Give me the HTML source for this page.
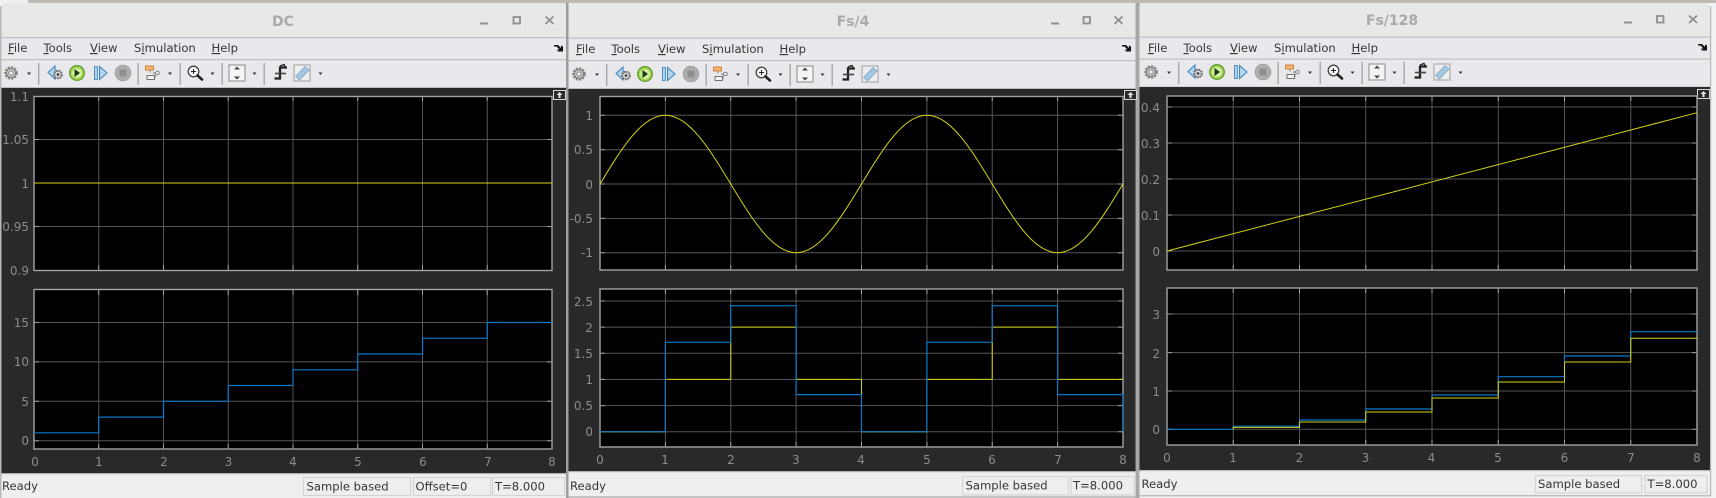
<!DOCTYPE html>
<html><head><meta charset="utf-8"><title>Scopes</title>
<style>
html,body{margin:0;padding:0;background:#ececec;width:1716px;height:498px;overflow:hidden}
svg{display:block}
text{font-family:"DejaVu Sans","Liberation Sans",sans-serif}
.t{font-weight:bold;font-size:14px;fill:#a9a9a9;text-anchor:middle}
.m{font-size:11.6px;fill:#363636}
.s{font-size:11.6px;fill:#363636}
.yl{font-size:12px;fill:#8c8c8c;text-anchor:end}
.xl{font-size:12px;fill:#8c8c8c;text-anchor:middle}
.g{stroke:#565656;stroke-width:1;fill:none}
.k{stroke:#a0a0a0;stroke-width:1;fill:none}
.a{stroke:#a4a4a4;stroke-width:1.4;fill:#000}
.b{stroke:#0a78c8;stroke-width:1.2;fill:none}
.y{stroke:#d4d417;stroke-width:1;fill:none}
.sb{fill:#eeeeee;stroke:#d4d4d4;stroke-width:1.2}
</style></head><body>
<svg width="1716" height="498" viewBox="0 0 1716 498" xmlns="http://www.w3.org/2000/svg">
<defs>
<g id="tb">
  <!-- gear -->
  <circle cx="11" cy="73" r="5.8" fill="none" stroke="#858585" stroke-width="2" stroke-dasharray="2.2 1.2"/>
  <circle cx="11" cy="73" r="4.6" fill="#cfcfcf" stroke="#777" stroke-width="1.1"/>
  <circle cx="11" cy="73" r="2.2" fill="#f0f0f0" stroke="#707070" stroke-width=".8"/>
  <path d="M27 72.500h4l-2 2.500z" fill="#333"/>
  <rect x="38" y="63" width="1.400" height="22" fill="#a8a8a8"/>
  <!-- back gear -->
  <path d="M55 66v13l-7-6.500z" fill="#b5d5ec" stroke="#3f88bc" stroke-width="1.100"/>
  <circle cx="58" cy="74.500" r="3.800" fill="#ddd" stroke="#666" stroke-width="2" stroke-dasharray="1.800 .8"/>
  <circle cx="58" cy="74.500" r="1.400" fill="#444"/>
  <!-- play -->
  <circle cx="77" cy="73" r="7.300" fill="#a6d756" stroke="#5d9a2a" stroke-width="1.300"/>
  <circle cx="77" cy="73" r="4.800" fill="#d9f0a8"/>
  <path d="M74.500 69v8l5.500-4z" fill="#1a3a10"/>
  <!-- step -->
  <rect x="94.500" y="66.500" width="2.800" height="13" fill="#b5d5ec" stroke="#3f88bc" stroke-width=".9"/>
  <path d="M99.500 66.500v13l7.500-6.500z" fill="#b5d5ec" stroke="#3f88bc" stroke-width="1.100"/>
  <!-- stop -->
  <circle cx="123" cy="73" r="7.800" fill="#adadad" stroke="#a2a2a2"/>
  <rect x="119.500" y="69.500" width="7" height="7" fill="#8f8f8f"/>
  <rect x="137.500" y="63" width="1.400" height="22" fill="#a8a8a8"/>
  <!-- blocks -->
  <path d="M150 70.500v2M153 73h3M155 74.500v3h-1" fill="none" stroke="#777" stroke-width=".9"/>
  <rect x="145.500" y="66" width="8" height="4" fill="#f3b878" stroke="#d07a2e" stroke-width=".9"/>
  <circle cx="157.500" cy="73" r="1.800" fill="#eee" stroke="#777" stroke-width=".9"/>
  <rect x="147" y="75.500" width="7.500" height="4" fill="#f2f2f2" stroke="#666" stroke-width=".9"/>
  <path d="M168 72.500h4l-2 2.500z" fill="#333"/>
  <rect x="179.500" y="63" width="1.400" height="22" fill="#a8a8a8"/>
  <!-- zoom -->
  <circle cx="193.500" cy="71.500" r="5.300" fill="#f6f6f6" stroke="#444" stroke-width="1.300"/>
  <path d="M191 71.500h5M193.500 69v5" stroke="#222" stroke-width="1"/>
  <path d="M197.500 75.500l4.500 4" stroke="#222" stroke-width="2.600" stroke-linecap="round"/>
  <path d="M210.500 72.500h4l-2 2.500z" fill="#333"/>
  <rect x="221.500" y="63" width="1.400" height="22" fill="#a8a8a8"/>
  <!-- fit -->
  <rect x="229" y="65" width="16" height="16" fill="#f4f4f4" stroke="#8a8a8a"/>
  <path d="M237 66.500l-3 3h6zM237 79.500l-3-3h6z" fill="#444"/>
  <path d="M252.500 72.500h4l-2 2.500z" fill="#333"/>
  <rect x="263.500" y="63" width="1.400" height="22" fill="#a8a8a8"/>
  <!-- step signal -->
  <path d="M274.500 78.500h5.500v-11h7" fill="none" stroke="#222" stroke-width="2.300"/>
  <path d="M275 73.500h11" stroke="#444" stroke-width="1.600"/>
  <path d="M280 66l4-1.500 1 2" fill="none" stroke="#222" stroke-width="1.400"/>
  <!-- ruler -->
  <rect x="294" y="65" width="16" height="16" fill="#eeeeee" stroke="#a0a0a0"/>
  <path d="M295.500 76.500l9.500-10 4 3.500-9.500 10z" fill="#a3c8e2" stroke="#7aa4c2" stroke-width=".8"/>
  <path d="M318.500 72.500h4l-2 2.500z" fill="#333"/>
</g>
<g id="dock">
  <path d="M0 0h4l3 3v-2.500l2 1v5h-5l-1-2h2.500l-3-3h-2.500z" fill="#111"/>
</g>
<g id="ab">
  <rect x=".5" y=".5" width="12" height="9" fill="#2a2a2a" stroke="#d8d8d8"/>
  <path d="M6.500 2l-3 3h2v3h2v-3h2z" fill="#e8e8e8"/>
</g>
<path id="sinhalf" d="M600 184C621.300 148.800 641.700 115.300 665.400 115.300C689.100 115.300 709.400 148.800 730.750 184C752.100 219.200 772.400 252.700 796.100 252.700C819.800 252.700 840.200 219.200 861.500 184" fill="none" stroke="#d4d417" stroke-width="1"/>
</defs>

<rect width="1716" height="498" fill="#f2f2f2"/>
<rect x="0" y="0" width="1716" height="3" fill="#bdbab6"/>
<rect x="0" y="0" width="28" height="3" fill="#efefef"/>

<!-- ============ WINDOW 1 ============ -->
<g>
<path d="M1 498V8q0-5 5-5H567V498z" fill="#e8e8e6"/>
<rect x="1" y="37" width="566" height="51" fill="#e9e8ec"/>
<rect x="1" y="37" width="566" height="1.200" fill="#bfbfbf"/>
<rect x="1" y="59" width="566" height="1.200" fill="#bfbfbf"/>
<rect x="1" y="87" width="566" height="1.200" fill="#bfbfbf"/>
<rect x="1" y="88" width="566" height="386" fill="#292929"/>
<rect x="1" y="474" width="566" height="24" fill="#efefef"/>
<rect x="1" y="473" width="566" height="1.200" fill="#b0b0b0"/>
<rect x="0" y="6" width="1.500" height="492" fill="#b8b8b8"/>
<rect x="566" y="3" width="2.500" height="495" fill="#9c9c9c"/>
<text class="t" x="283" y="26">DC</text>
<path d="M480 23.500h8" stroke="#8f8f8f" stroke-width="2"/>
<rect x="513.500" y="17" width="6.500" height="6.500" fill="none" stroke="#8f8f8f" stroke-width="1.800"/>
<path d="M545.500 16.500l8 7.500m0-7.500l-8 7.500" stroke="#8f8f8f" stroke-width="1.800"/>
<text class="m" x="8" y="52"><tspan text-decoration="underline">F</tspan>ile</text>
<text class="m" x="43.500" y="52"><tspan text-decoration="underline">T</tspan>ools</text>
<text class="m" x="90" y="52"><tspan text-decoration="underline">V</tspan>iew</text>
<text class="m" x="134" y="52">S<tspan text-decoration="underline">i</tspan>mulation</text>
<text class="m" x="211.500" y="52"><tspan text-decoration="underline">H</tspan>elp</text>
<use href="#dock" transform="translate(554,45)"/>
<use href="#tb"/>
<use href="#ab" transform="translate(553,90)"/>

<rect class="a" x="34" y="96.500" width="518" height="174"/>
<path class="g" d="M98.750 96V270M163.500 96V270M228.250 96V270M293 96V270M357.750 96V270M422.500 96V270M487.250 96V270M34 139.500H552M34 183H552M34 226.500H552"/>
<path class="k" d="M98.750 96v5M163.500 96v5M228.250 96v5M293 96v5M357.750 96v5M422.500 96v5M487.250 96v5M98.750 270v-5M163.500 270v-5M228.250 270v-5M293 270v-5M357.750 270v-5M422.500 270v-5M487.250 270v-5M34 139.500h5M34 183h5M34 226.500h5M552 139.500h-5M552 183h-5M552 226.500h-5"/>
<path class="y" d="M34 183H552"/>
<text class="yl" x="29" y="101">1.1</text>
<text class="yl" x="29" y="144">1.05</text>
<text class="yl" x="29" y="188">1</text>
<text class="yl" x="29" y="231">0.95</text>
<text class="yl" x="29" y="275">0.9</text>

<rect class="a" x="34" y="289.500" width="518" height="159.500"/>
<path class="g" d="M98.750 290V449M163.500 290V449M228.250 290V449M293 290V449M357.750 290V449M422.500 290V449M487.250 290V449M34 322.500H552M34 361.900H552M34 401.300H552M34 440.700H552"/>
<path class="k" d="M98.750 290v5M163.500 290v5M228.250 290v5M293 290v5M357.750 290v5M422.500 290v5M487.250 290v5M98.750 449v-5M163.500 449v-5M228.250 449v-5M293 449v-5M357.750 449v-5M422.500 449v-5M487.250 449v-5M34 322.500h5M34 361.900h5M34 401.300h5M34 440.700h5M552 322.500h-5M552 361.900h-5M552 401.300h-5M552 440.700h-5"/>
<path class="b" d="M34 432.800H98.750V417.100H163.500V401.300H228.250V385.500H293V369.800H357.750V354H422.500V338.300H487.250V322.500H552"/>
<text class="yl" x="29" y="327">15</text>
<text class="yl" x="29" y="366">10</text>
<text class="yl" x="29" y="406">5</text>
<text class="yl" x="29" y="445">0</text>
<text class="xl" x="35" y="466">0</text><text class="xl" x="99" y="466">1</text><text class="xl" x="164" y="466">2</text><text class="xl" x="228.500" y="466">3</text><text class="xl" x="293" y="466">4</text><text class="xl" x="358" y="466">5</text><text class="xl" x="423" y="466">6</text><text class="xl" x="488" y="466">7</text><text class="xl" x="552" y="466">8</text>

<text class="s" x="2" y="490">Ready</text>
<rect class="sb" x="303.500" y="477.500" width="107" height="18"/>
<rect class="sb" x="413.500" y="477.500" width="77" height="18"/>
<rect class="sb" x="492.500" y="477.500" width="72" height="18"/>
<text class="s" x="306.500" y="490.500">Sample based</text>
<text class="s" x="415.500" y="490.500">Offset=0</text>
<text class="s" x="495" y="490.500">T=8.000</text>
</g>

<!-- ============ WINDOW 2 ============ -->
<g>
<rect x="568.500" y="3" width="568" height="495" fill="#e8e8e6"/>
<rect x="568.500" y="38" width="568" height="51" fill="#e9e8ec"/>
<rect x="568.500" y="37.500" width="568" height="1.200" fill="#bfbfbf"/>
<rect x="568.500" y="60" width="568" height="1.200" fill="#bfbfbf"/>
<rect x="568.500" y="88" width="568" height="1.200" fill="#bfbfbf"/>
<rect x="568.500" y="89" width="568" height="383" fill="#292929"/>
<rect x="568.500" y="472" width="568" height="26" fill="#efefef"/>
<rect x="568.500" y="471" width="568" height="1.200" fill="#b0b0b0"/>
<rect x="568.500" y="496" width="568" height="2" fill="#c4c4c4"/>
<rect x="1135.500" y="3" width="4" height="495" fill="#a8a8a8"/>
<text class="t" x="853" y="26">Fs/4</text>
<path d="M1051 23.500h8" stroke="#8f8f8f" stroke-width="2"/>
<rect x="1083.500" y="17" width="6.500" height="6.500" fill="none" stroke="#8f8f8f" stroke-width="1.800"/>
<path d="M1114.500 16.500l8 7.500m0-7.500l-8 7.500" stroke="#8f8f8f" stroke-width="1.800"/>
<text class="m" x="576" y="53"><tspan text-decoration="underline">F</tspan>ile</text>
<text class="m" x="611.500" y="53"><tspan text-decoration="underline">T</tspan>ools</text>
<text class="m" x="658" y="53"><tspan text-decoration="underline">V</tspan>iew</text>
<text class="m" x="702" y="53">S<tspan text-decoration="underline">i</tspan>mulation</text>
<text class="m" x="779.500" y="53"><tspan text-decoration="underline">H</tspan>elp</text>
<use href="#dock" transform="translate(1122,45)"/>
<use href="#tb" transform="translate(568,1)"/>
<use href="#ab" transform="translate(1124,90)"/>

<rect class="a" x="600" y="96.500" width="523" height="173.500"/>
<path class="g" d="M665.400 96V270M730.750 96V270M796.100 96V270M861.500 96V270M926.900 96V270M992.250 96V270M1057.600 96V270M600 115.300H1123M600 149.700H1123M600 184H1123M600 218.400H1123M600 252.700H1123"/>
<path class="k" d="M665.400 96v5M730.750 96v5M796.100 96v5M861.500 96v5M926.900 96v5M992.250 96v5M1057.600 96v5M665.400 270v-5M730.750 270v-5M796.100 270v-5M861.500 270v-5M926.900 270v-5M992.250 270v-5M1057.600 270v-5M600 115.300h5M600 149.700h5M600 184h5M600 218.400h5M600 252.700h5M1123 115.300h-5M1123 149.700h-5M1123 184h-5M1123 218.400h-5M1123 252.700h-5"/>
<use href="#sinhalf"/>
<use href="#sinhalf" transform="translate(261.500,0)"/>
<text class="yl" x="593" y="120">1</text>
<text class="yl" x="593" y="154">0.5</text>
<text class="yl" x="593" y="189">0</text>
<text class="yl" x="593" y="223">-0.5</text>
<text class="yl" x="593" y="257">-1</text>

<rect class="a" x="600" y="289" width="523" height="158"/>
<path class="g" d="M665.400 289V447M730.750 289V447M796.100 289V447M861.500 289V447M926.900 289V447M992.250 289V447M1057.600 289V447M600 301H1123M600 327.100H1123M600 353.300H1123M600 379.400H1123M600 405.600H1123M600 431.700H1123"/>
<path class="k" d="M665.400 289v5M730.750 289v5M796.100 289v5M861.500 289v5M926.900 289v5M992.250 289v5M1057.600 289v5M665.400 447v-5M730.750 447v-5M796.100 447v-5M861.500 447v-5M926.900 447v-5M992.250 447v-5M1057.600 447v-5M600 301h5M600 327.100h5M600 353.300h5M600 379.400h5M600 405.600h5M600 431.700h5M1123 301h-5M1123 327.100h-5M1123 353.300h-5M1123 379.400h-5M1123 405.600h-5M1123 431.700h-5"/>
<path class="y" d="M600 431.700H665.400V379.400H730.750V327.100H796.100V379.400H861.500V431.700H926.900V379.400H992.250V327.100H1057.600V379.400H1123"/>
<path class="b" d="M600 431.700H665.400V342.300H730.750V305.700H796.100V394.600H861.500V431.700H926.900V342.300H992.250V305.700H1057.600V394.600H1123V431.700"/>
<text class="yl" x="593" y="306">2.5</text>
<text class="yl" x="593" y="332">2</text>
<text class="yl" x="593" y="358">1.5</text>
<text class="yl" x="593" y="384">1</text>
<text class="yl" x="593" y="410">0.5</text>
<text class="yl" x="593" y="436">0</text>
<text class="xl" x="600" y="464">0</text><text class="xl" x="665" y="464">1</text><text class="xl" x="731" y="464">2</text><text class="xl" x="796" y="464">3</text><text class="xl" x="861" y="464">4</text><text class="xl" x="927" y="464">5</text><text class="xl" x="992" y="464">6</text><text class="xl" x="1058" y="464">7</text><text class="xl" x="1123" y="464">8</text>

<text class="s" x="570" y="490">Ready</text>
<rect class="sb" x="962.500" y="476.500" width="106" height="18.500"/>
<rect class="sb" x="1071" y="476.500" width="63" height="18.500"/>
<text class="s" x="965.500" y="489.500">Sample based</text>
<text class="s" x="1073" y="489.500">T=8.000</text>
</g>

<!-- ============ WINDOW 3 ============ -->
<g>
<path d="M1139.500 495V3H1704q6 0 6 6V495z" fill="#e8e8e6"/>
<rect x="1139.500" y="37" width="570.500" height="50" fill="#e9e8ec"/>
<rect x="1139.500" y="36.500" width="570.500" height="1.200" fill="#bfbfbf"/>
<rect x="1139.500" y="58.500" width="570.500" height="1.200" fill="#bfbfbf"/>
<rect x="1139.500" y="86.500" width="570.500" height="1.200" fill="#bfbfbf"/>
<rect x="1139.500" y="87" width="570.500" height="383" fill="#292929"/>
<rect x="1139.500" y="471" width="570.500" height="24" fill="#efefef"/>
<rect x="1139.500" y="470" width="570.500" height="1.200" fill="#c0c0c0"/>
<rect x="1139.500" y="495" width="571" height="1.500" fill="#bdbdbd"/>
<rect x="1710" y="6" width="1.200" height="490" fill="#b8b8b8"/>
<text class="t" x="1392" y="25">Fs/128</text>
<path d="M1624 22.500h8" stroke="#8f8f8f" stroke-width="2"/>
<rect x="1657" y="16" width="6.500" height="6.500" fill="none" stroke="#8f8f8f" stroke-width="1.800"/>
<path d="M1689 15.500l8 7.500m0-7.500l-8 7.500" stroke="#8f8f8f" stroke-width="1.800"/>
<text class="m" x="1148" y="52"><tspan text-decoration="underline">F</tspan>ile</text>
<text class="m" x="1183.500" y="52"><tspan text-decoration="underline">T</tspan>ools</text>
<text class="m" x="1230" y="52"><tspan text-decoration="underline">V</tspan>iew</text>
<text class="m" x="1274" y="52">S<tspan text-decoration="underline">i</tspan>mulation</text>
<text class="m" x="1351.500" y="52"><tspan text-decoration="underline">H</tspan>elp</text>
<use href="#dock" transform="translate(1698,44)"/>
<use href="#tb" transform="translate(1140,-1)"/>
<use href="#ab" transform="translate(1697,89)"/>

<rect class="a" x="1167" y="96" width="530" height="174"/>
<path class="g" d="M1233.250 96V270M1299.500 96V270M1365.750 96V270M1432 96V270M1498.250 96V270M1564.500 96V270M1630.750 96V270M1167 107H1697M1167 143H1697M1167 179H1697M1167 215H1697M1167 251H1697"/>
<path class="k" d="M1233.250 96v5M1299.500 96v5M1365.750 96v5M1432 96v5M1498.250 96v5M1564.500 96v5M1630.750 96v5M1233.250 270v-5M1299.500 270v-5M1365.750 270v-5M1432 270v-5M1498.250 270v-5M1564.500 270v-5M1630.750 270v-5M1167 107h5M1167 143h5M1167 179h5M1167 215h5M1167 251h5M1697 107h-5M1697 143h-5M1697 179h-5M1697 215h-5M1697 251h-5"/>
<path class="y" d="M1167 251L1697 112.700"/>
<text class="yl" x="1160" y="112">0.4</text>
<text class="yl" x="1160" y="148">0.3</text>
<text class="yl" x="1160" y="184">0.2</text>
<text class="yl" x="1160" y="220">0.1</text>
<text class="yl" x="1160" y="256">0</text>

<rect class="a" x="1167" y="288" width="530" height="157"/>
<path class="g" d="M1233.250 288V445M1299.500 288V445M1365.750 288V445M1432 288V445M1498.250 288V445M1564.500 288V445M1630.750 288V445M1167 314H1697M1167 352.600H1697M1167 391H1697M1167 429.300H1697"/>
<path class="k" d="M1233.250 288v5M1299.500 288v5M1365.750 288v5M1432 288v5M1498.250 288v5M1564.500 288v5M1630.750 288v5M1233.250 445v-5M1299.500 445v-5M1365.750 445v-5M1432 445v-5M1498.250 445v-5M1564.500 445v-5M1630.750 445v-5M1167 314h5M1167 352.600h5M1167 391h5M1167 429.300h5M1697 314h-5M1697 352.600h-5M1697 391h-5M1697 429.300h-5"/>
<path class="b" d="M1167 429.300H1233.250V426.200H1299.500V420H1365.750V409H1432V395H1498.250V376.700H1564.500V356H1630.750V331.700H1697"/>
<path class="y" d="M1233.250 429.300V427.400H1299.500V422H1365.750V412H1432V398H1498.250V382H1564.500V362H1630.750V338.300H1697"/>
<text class="yl" x="1160" y="319">3</text>
<text class="yl" x="1160" y="358">2</text>
<text class="yl" x="1160" y="396">1</text>
<text class="yl" x="1160" y="434">0</text>
<text class="xl" x="1167" y="462">0</text><text class="xl" x="1233" y="462">1</text><text class="xl" x="1299.500" y="462">2</text><text class="xl" x="1365.500" y="462">3</text><text class="xl" x="1431.500" y="462">4</text><text class="xl" x="1498" y="462">5</text><text class="xl" x="1564.500" y="462">6</text><text class="xl" x="1631" y="462">7</text><text class="xl" x="1697" y="462">8</text>

<text class="s" x="1141.500" y="488">Ready</text>
<rect class="sb" x="1535.500" y="475.500" width="106" height="17.500"/>
<rect class="sb" x="1645" y="475.500" width="62" height="17.500"/>
<text class="s" x="1538" y="488">Sample based</text>
<text class="s" x="1647.500" y="488">T=8.000</text>
</g>
</svg>
</body></html>
